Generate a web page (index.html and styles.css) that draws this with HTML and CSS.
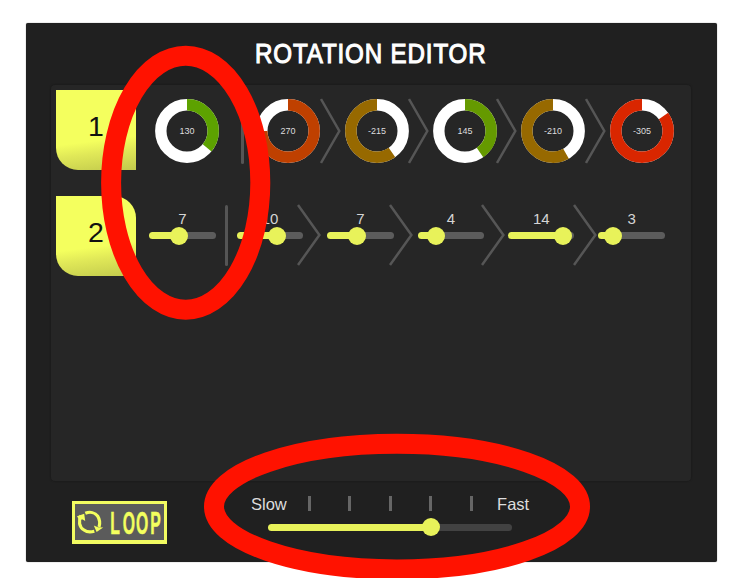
FILE: index.html
```
<!DOCTYPE html>
<html lang="en">
<head>
<meta charset="utf-8">
<title>Rotation Editor</title>
<link rel="stylesheet" href="styles.css">
</head>
<body>
<svg class="defs" width="0" height="0" aria-hidden="true">
  <symbol id="chev-a" viewBox="0 0 21 66"><path d="M1 1 L19.3 33 L1 65"/></symbol>
  <symbol id="chev-b" viewBox="0 0 24 62"><path d="M1 1 L22.4 31 L1 61"/></symbol>
</svg>
<main class="editor">
  <h1 class="title"><span>ROTATION EDITOR</span></h1>
  <section class="board">
    <div class="row">
      <div class="tab">1</div>
      <div class="dials">
        <svg class="dial" viewBox="0 0 64 64"><circle class="ring" cx="32" cy="32" r="26.2"/><circle class="arc green" cx="32" cy="32" r="26.2" pathLength="360" stroke-dasharray="130 360"/><text x="32" y="36.4">130</text></svg>
        <i class="bar bar-dial"></i>
        <svg class="dial" viewBox="0 0 64 64"><circle class="ring" cx="32" cy="32" r="26.2"/><circle class="arc orange" cx="32" cy="32" r="26.2" pathLength="360" stroke-dasharray="270 360"/><text x="32" y="36.4">270</text></svg>
        <svg class="chev-dial"><use href="#chev-a"/></svg>
        <svg class="dial" viewBox="0 0 64 64"><circle class="ring" cx="32" cy="32" r="26.2"/><circle class="arc ccw brown" cx="32" cy="32" r="26.2" pathLength="360" stroke-dasharray="215 360"/><text x="32" y="36.4">-215</text></svg>
        <svg class="chev-dial"><use href="#chev-a"/></svg>
        <svg class="dial" viewBox="0 0 64 64"><circle class="ring" cx="32" cy="32" r="26.2"/><circle class="arc lime" cx="32" cy="32" r="26.2" pathLength="360" stroke-dasharray="145 360"/><text x="32" y="36.4">145</text></svg>
        <svg class="chev-dial"><use href="#chev-a"/></svg>
        <svg class="dial" viewBox="0 0 64 64"><circle class="ring" cx="32" cy="32" r="26.2"/><circle class="arc ccw brown" cx="32" cy="32" r="26.2" pathLength="360" stroke-dasharray="210 360"/><text x="32" y="36.4">-210</text></svg>
        <svg class="chev-dial"><use href="#chev-a"/></svg>
        <svg class="dial" viewBox="0 0 64 64"><circle class="ring" cx="32" cy="32" r="26.2"/><circle class="arc ccw red" cx="32" cy="32" r="26.2" pathLength="360" stroke-dasharray="305 360"/><text x="32" y="36.4">-305</text></svg>
      </div>
    </div>
    <div class="row">
      <div class="tab">2</div>
      <div class="lane">
        <div class="sliders">
          <div class="slider first" style="--v:29.7px"><b>7</b><div class="track"><i class="thumb"></i></div></div>
          <div class="slider" style="--v:40px"><b>10</b><div class="track"><i class="thumb"></i></div></div>
          <div class="slider" style="--v:29.4px"><b>7</b><div class="track"><i class="thumb"></i></div></div>
          <div class="slider" style="--v:18.7px"><b>4</b><div class="track"><i class="thumb"></i></div></div>
          <div class="slider" style="--v:54.6px"><b>14</b><div class="track"><i class="thumb"></i></div></div>
          <div class="slider" style="--v:15px"><b>3</b><div class="track"><i class="thumb"></i></div></div>
        </div>
        <div class="seps">
          <i class="bar bar-slider"></i>
          <svg><use href="#chev-b"/></svg>
          <svg><use href="#chev-b"/></svg>
          <svg><use href="#chev-b"/></svg>
          <svg><use href="#chev-b"/></svg>
        </div>
      </div>
    </div>
  </section>
  <footer class="controls">
    <button class="loop">
      <svg viewBox="0 0 95 44">
        <path class="stroke" d="M9 14.5 C6.3 20 7 26 12 29 C15 31.2 18.5 31.3 22.3 30.2"/>
        <path class="stroke" d="M13.3 12.3 C18 10.4 23 11.6 25.8 15.3 C27.8 18.5 28.3 22 27 26"/>
        <path class="solid" d="M5 15.2 L12.2 12.8 L13.2 20 L10.8 18.4 L7 18.5 Z"/>
        <path class="solid" d="M21.8 24.6 L26 26.2 L31.2 26.6 L24.6 31 Z"/>
        <text x="76.5 101.5 128 156.5" y="33.2">LOOP</text>
      </svg>
    </button>
    <div class="speed">
      <div class="scale">
        <span class="slow">Slow</span>
        <div class="ticks"><i></i><i></i><i></i><i></i><i></i></div>
        <span class="fast">Fast</span>
      </div>
      <div class="track dark" style="--v:163.3px"><i class="thumb"></i></div>
    </div>
  </footer>
</main>
<svg class="marks" viewBox="0 0 740 578">
  <ellipse cx="185.7" cy="182.7" rx="74.6" ry="127"/>
  <ellipse cx="397" cy="506.6" rx="183" ry="62.8"/>
</svg>
</body>
</html>
```
FILE: styles.css
```
* { box-sizing: border-box; }
body {
  margin: 0;
  padding: 23px 23px 16px 26px;
  height: 578px;
  overflow: hidden;
  background: #fff;
  font-family: "Liberation Sans", Arial, sans-serif;
}
svg { display: block; flex: none; }
.defs { position: absolute; }
.editor {
  height: 539px;
  padding: 0 26px 0 25px;
  background: #202020;
  border-radius: 2px;
  box-shadow: 0 0 1px #555;
}
.title {
  margin: 0;
  height: 62px;
  padding-top: 15px;
  color: #fff;
  font-size: 28px;
  line-height: 32px;
  font-weight: 400;
  display: flex;
  justify-content: center;
  white-space: nowrap;
}
.title span {
  letter-spacing: 1px;
  transform: translateX(-.5px) scaleX(.862);
  -webkit-text-stroke: 1.1px #fff;
}
.board {
  height: 396px;
  padding: 5px 0 0 5px;
  background: #262626;
  border-radius: 4px;
  box-shadow: 0 0 1px 1px #1c1c1c;
  display: flex;
  flex-direction: column;
  gap: 26px;
}
.row { display: flex; height: 80px; }
.tab {
  flex: none;
  width: 80px;
  height: 80px;
  border-radius: 0 22px 0 22px;
  background: linear-gradient(173deg, #f4ff5e 0 62%, #e0e858 76%, #c2ca4c 100%);
  color: #111;
  font-size: 28.5px;
  line-height: 73px;
  text-align: center;
}
.row:first-child .tab { border-top-right-radius: 0; }
.dials { display: flex; align-items: center; height: 82px; margin-left: 18.8px; }
.dial { width: 64px; height: 64px; }
.ring, .arc { fill: none; stroke: #fff; stroke-width: 11.4; }
.arc { transform: rotate(-90deg); transform-origin: 32px 32px; }
.arc.ccw { transform: scaleX(-1) rotate(-90deg); }
.arc.green { stroke: #5da200; }
.arc.lime { stroke: #659a00; }
.arc.orange { stroke: #bf4000; }
.arc.brown { stroke: #976900; }
.arc.red { stroke: #d92600; }
.dial text { fill: #ddd; font-size: 9px; text-anchor: middle; transform: translateY(-1px); }
.bar { display: block; width: 3.2px; background: #555; border-radius: 1.5px; }
.bar-dial { height: 66px; margin: 0 12.1px 0 22.2px; }
.chev-dial { width: 21px; height: 66px; margin: 0 4px 0 -.6px; }
symbol path { fill: none; stroke: #565656; stroke-width: 2.5; }
.lane { display: grid; margin-left: 13.2px; }
.sliders, .seps { grid-area: 1 / 1; display: flex; }
.sliders { gap: 24px; padding-top: 14px; }
.slider { width: 66.4px; }
.slider.first { margin-right: -2.7px; }
.slider b {
  display: block;
  height: 22.3px;
  color: #d5d5d5;
  font-size: 15px;
  line-height: 17px;
  font-weight: 400;
  text-align: center;
}
.track {
  display: flex;
  align-items: center;
  height: 7px;
  border-radius: 3.5px;
  background: linear-gradient(90deg, #e8f25a var(--v), #5c5c5c var(--v));
}
.thumb {
  flex: none;
  width: 18px;
  height: 18px;
  margin-left: calc(var(--v) - 9px);
  border-radius: 50%;
  background: #e8f25a;
}
.seps { padding: 8px 0 0 75.8px; gap: 68px; }
.bar-slider { height: 61px; margin: 1px 1.2px 0 0; }
.seps svg { width: 24px; height: 62px; }
.controls { display: flex; padding: 20px 0 0 21px; }
.loop {
  width: 95px;
  height: 43px;
  padding: 0;
  border: 3px solid #f2fb61;
  border-bottom-width: 4px;
  background: #5b5b5b;
}
.loop svg { width: 95px; height: 44px; margin: -3px; }
.stroke { fill: none; stroke: #f4ff5e; stroke-width: 3.2; }
.solid { fill: #f4ff5e; }
.loop text {
  fill: #f4ff5e;
  stroke: #f4ff5e;
  stroke-width: .5;
  font-size: 31.5px;
  font-weight: 700;
  transform: scaleX(.5);
}
.speed { width: 290px; margin-left: 84px; }
.scale { display: flex; height: 22.5px; margin-top: -7px; padding-top: 1px; color: #ddd; font-size: 16.5px; line-height: 19px; }
.slow, .fast { flex: none; width: 56.8px; }
.fast { margin-left: 24.3px; width: auto; }
.ticks { display: flex; gap: 37.5px; padding-top: 1px; }
.ticks i { width: 3px; height: 15px; background: #666; }
.track.dark {
  width: 243.5px;
  height: 7.5px;
  margin: 7px 0 0 17px;
  background: linear-gradient(90deg, #e8f25a var(--v), #424242 var(--v));
}
.marks {
  position: absolute;
  inset: 0;
  width: 740px;
  height: 578px;
  fill: none;
  stroke: #ff1200;
  stroke-width: 20;
}
```
